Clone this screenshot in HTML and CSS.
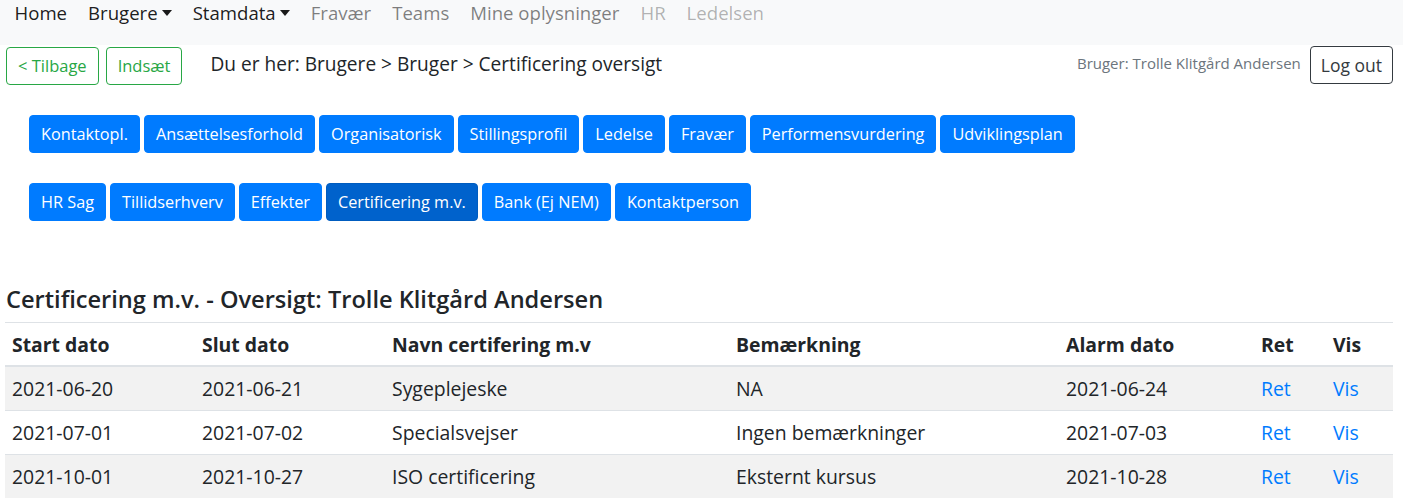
FILE: index.html
```html
<!DOCTYPE html>
<html lang="da">
<head>
<meta charset="utf-8">
<title>Certificering oversigt</title>
<link rel="stylesheet" href="styles.css">
</head>
<body>
<nav class="topnav">
  <ul class="nav-list">
    <li><a class="nav-link active" href="#">Home</a></li>
    <li><a class="nav-link active dropdown" href="#">Brugere</a></li>
    <li><a class="nav-link active dropdown" href="#">Stamdata</a></li>
    <li><a class="nav-link" href="#">Fravær</a></li>
    <li><a class="nav-link" href="#">Teams</a></li>
    <li><a class="nav-link" href="#">Mine oplysninger</a></li>
    <li><a class="nav-link muted" href="#">HR</a></li>
    <li><a class="nav-link muted" href="#">Ledelsen</a></li>
  </ul>
</nav>

<div class="toolbar">
  <div class="toolbar-left">
    <a class="btn btn-outline-success" href="#">&lt; Tilbage</a>
    <a class="btn btn-outline-success" href="#">Indsæt</a>
    <span class="breadcrumb">Du er her: Brugere &gt; Bruger &gt; Certificering oversigt</span>
  </div>
  <div class="toolbar-right">
    <span class="user-label">Bruger: Trolle Klitgård Andersen</span>
    <a class="btn btn-outline-dark" href="#">Log out</a>
  </div>
</div>

<div class="tabs">
  <div class="tab-row">
    <a class="btn btn-primary" href="#">Kontaktopl.</a>
    <a class="btn btn-primary" href="#">Ansættelsesforhold</a>
    <a class="btn btn-primary" href="#">Organisatorisk</a>
    <a class="btn btn-primary" href="#">Stillingsprofil</a>
    <a class="btn btn-primary" href="#">Ledelse</a>
    <a class="btn btn-primary" href="#">Fravær</a>
    <a class="btn btn-primary" href="#">Performensvurdering</a>
    <a class="btn btn-primary" href="#">Udviklingsplan</a>
  </div>
  <div class="tab-row">
    <a class="btn btn-primary" href="#">HR Sag</a>
    <a class="btn btn-primary" href="#">Tillidserhverv</a>
    <a class="btn btn-primary" href="#">Effekter</a>
    <a class="btn btn-primary selected" href="#">Certificering m.v.</a>
    <a class="btn btn-primary" href="#">Bank (Ej NEM)</a>
    <a class="btn btn-primary" href="#">Kontaktperson</a>
  </div>
</div>

<main class="content">
  <h4 class="page-title">Certificering m.v. - Oversigt: Trolle Klitgård Andersen</h4>
  <table class="data-table">
    <colgroup>
      <col class="c-start"><col class="c-slut"><col class="c-navn"><col class="c-bem"><col class="c-alarm"><col class="c-ret"><col class="c-vis">
    </colgroup>
    <thead>
      <tr><th>Start dato</th><th>Slut dato</th><th>Navn certifering m.v</th><th>Bemærkning</th><th>Alarm dato</th><th>Ret</th><th>Vis</th></tr>
    </thead>
    <tbody>
      <tr><td>2021-06-20</td><td>2021-06-21</td><td>Sygeplejeske</td><td>NA</td><td>2021-06-24</td><td><a href="#">Ret</a></td><td><a href="#">Vis</a></td></tr>
      <tr><td>2021-07-01</td><td>2021-07-02</td><td>Specialsvejser</td><td>Ingen bemærkninger</td><td>2021-07-03</td><td><a href="#">Ret</a></td><td><a href="#">Vis</a></td></tr>
      <tr><td>2021-10-01</td><td>2021-10-27</td><td>ISO certificering</td><td>Eksternt kursus</td><td>2021-10-28</td><td><a href="#">Ret</a></td><td><a href="#">Vis</a></td></tr>
    </tbody>
  </table>
</main>
</body>
</html>
```

FILE: styles.css
```css
* { box-sizing: border-box; }
html, body { margin: 0; padding: 0; }
body {
  font-family: "Open Sans", "Noto Sans", sans-serif;
  color: #212529;
  background: #fff;
  font-size: 16px;
}
a { text-decoration: none; }

.topnav {
  background: #f8f9fa;
  height: 45px;
  padding-left: 4px;
}
.nav-list {
  list-style: none;
  margin: 0;
  padding: 0;
  display: flex;
}
.nav-link {
  display: block;
  font-size: 18.6px;
  line-height: 25px;
  padding: 0 10.5px;
  color: rgba(0,0,0,.5);
}
.nav-link.active { color: rgba(0,0,0,.9); }
.nav-link.muted { color: rgba(0,0,0,.3); }
.nav-link.dropdown::after {
  content: "";
  display: inline-block;
  margin-left: 4px;
  vertical-align: 4px;
  border-top: 6px solid;
  border-left: 5.5px solid transparent;
  border-right: 5.5px solid transparent;
}

.btn {
  display: inline-block;
  font-size: 16.25px;
  line-height: 24px;
  padding: 6px 11px;
  border: 1px solid transparent;
  border-radius: 4px;
  white-space: nowrap;
}
.btn-outline-success { color: #28a745; border-color: #28a745; font-size: 16.5px; }
.btn-outline-dark { color: #343a40; border-color: #343a40; font-size: 17.5px; padding: 6px 10px; }
.btn-primary { color: #fff; background: #007bff; border-color: #007bff; }
.btn-primary.selected { background: #0062cc; border-color: #005cbf; }

.toolbar {
  display: flex;
  justify-content: space-between;
  align-items: flex-start;
  padding: 1px 10px 0 6px;
}
.toolbar-left { display: flex; align-items: flex-start; gap: 7px; padding-top: 1px; }
.breadcrumb {
  font-size: 19.1px;
  line-height: 26px;
  margin-left: 21px;
  margin-top: 4px;
}
.toolbar-right { display: flex; align-items: flex-start; gap: 9px; }
.user-label {
  font-size: 15px;
  color: #6c757d;
  line-height: 22px;
  margin-top: 6px;
}

.tabs {
  padding: 30px 0 0 29px;
  display: flex;
  flex-direction: column;
  gap: 30px;
}
.tab-row { display: flex; gap: 4px; }

.content { padding: 63px 10px 0 5px; }
.page-title {
  margin: 0 0 8px 1px;
  font-size: 23.6px;
  font-weight: 600;
  line-height: 30px;
}
.data-table {
  width: 100%;
  border-collapse: collapse;
  table-layout: fixed;
  font-size: 19.4px;
}
.c-start { width: 190px; }
.c-slut { width: 190px; }
.c-navn { width: 344px; }
.c-bem { width: 330px; }
.c-alarm { width: 195px; }
.c-ret { width: 72px; }
.c-vis { width: 67px; }
.data-table th, .data-table td {
  text-align: left;
  padding: 8px 7px;
  line-height: 27px;
  border-top: 1px solid #dee2e6;
  white-space: nowrap;
}
.data-table th { font-weight: 700; border-bottom: 2px solid #dee2e6; padding-bottom: 7px; padding-top: 8px; }
.data-table tbody tr:nth-child(odd) { background: #f2f2f2; }
.data-table td a { color: #007bff; }
```
